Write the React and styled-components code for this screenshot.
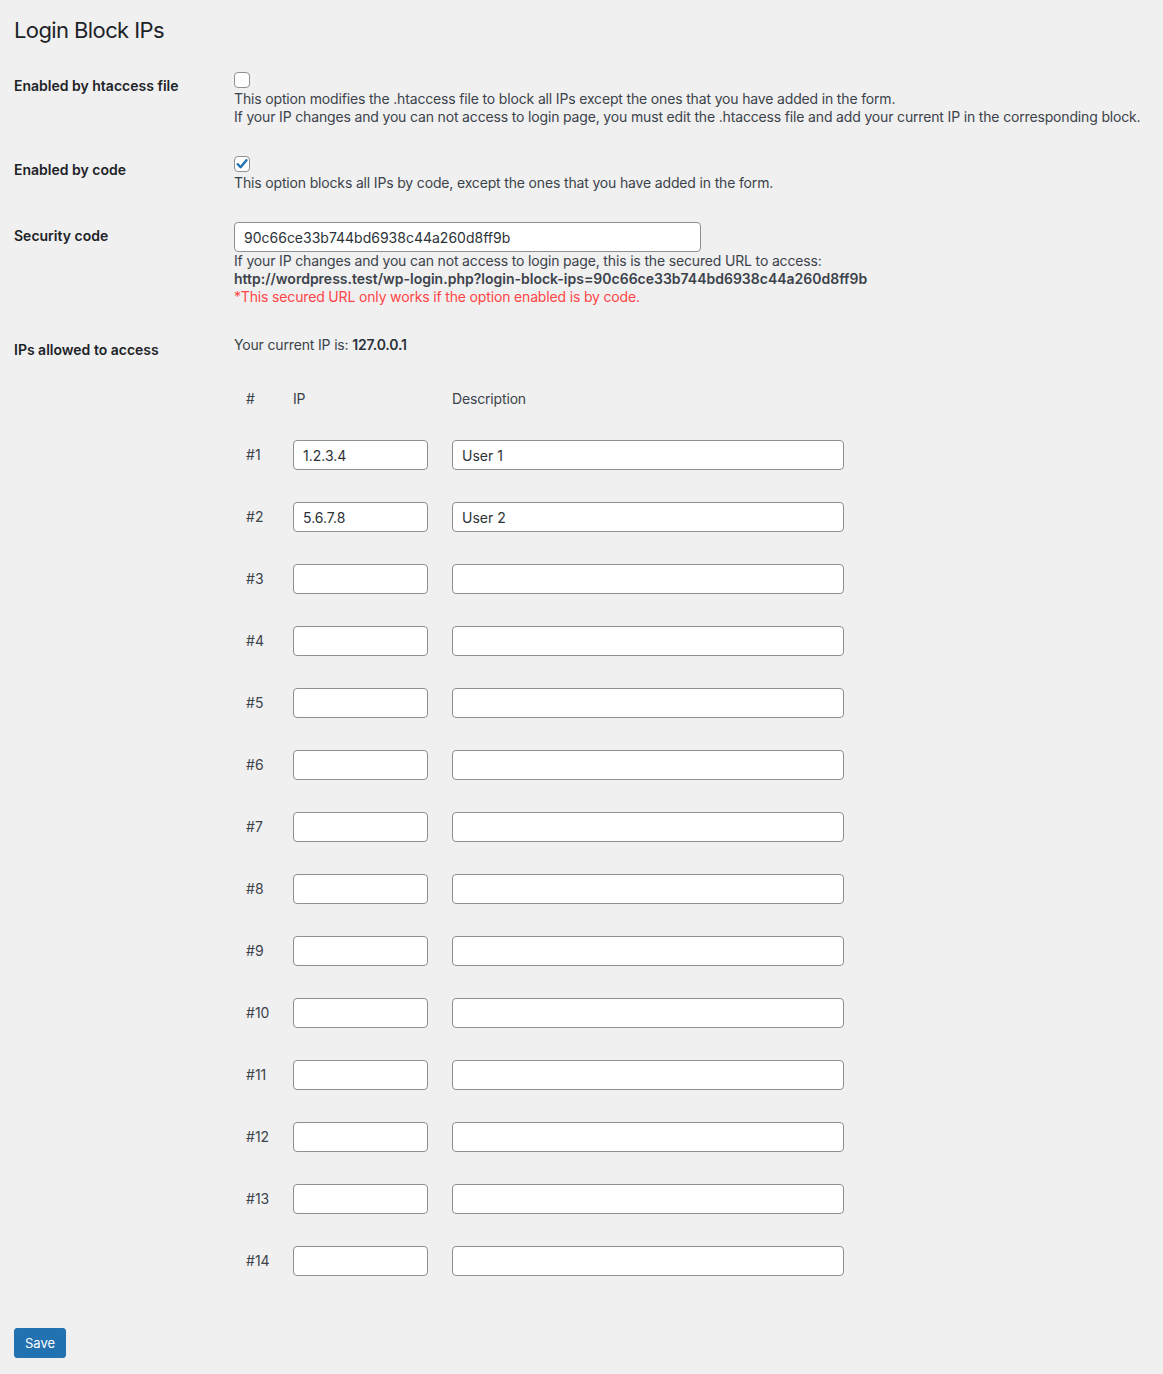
import React from "react";
import styled, { createGlobalStyle } from "styled-components";

const font = `Inter, "Liberation Sans", Arial, sans-serif`;

const GlobalStyle = createGlobalStyle`
  body {
    margin: 0;
    background: #f0f0f1;
    color: #3c434a;
    font-family: ${font};
    font-size: 14px;
  }
`;

const Wrap = styled.div`
  padding: 0 14px 16px 14px;
`;

const Title = styled.h1`
  margin: 0;
  padding: 17px 0 0;
  height: 40px;
  font-size: 22px;
  font-weight: 400;
  letter-spacing: -0.6px;
  line-height: 26px;
  color: #1d2327;
`;

const Row = styled.div`
  display: flex;
  align-items: flex-start;
`;

const Label = styled.div`
  width: 220px;
  flex: none;
  padding: 20px 0;
  font-weight: 600;
  font-size: 14px;
  line-height: 18px;
  color: #1d2327;
`;

const Field = styled.div`
  flex: 1;
  padding: 15px 0;
  line-height: 18px;
`;

const Description = styled.p`
  margin: 0;
  line-height: 18px;
  white-space: nowrap;
  letter-spacing: ${({ $bold }) => ($bold ? "0" : "-0.16px")};
  color: ${({ $warn }) => ($warn ? "#ff4545" : "#3c434a")};
  font-weight: ${({ $bold }) => ($bold ? 600 : 400)};
`;

const Box = styled.span`
  display: block;
  width: 16px;
  height: 16px;
  box-sizing: border-box;
  border: 1px solid #8c8f94;
  border-radius: 4px;
  background: #fff;
  margin: 0 0 2px;
  position: relative;

  svg {
    position: absolute;
    left: 1px;
    top: 1px;
  }
`;

const Checkbox = ({ checked }) => (
  <Box>
    {checked && (
      <svg width="12" height="12" viewBox="0 0 12 12">
        <path
          d="M1.8 6.2 L4.6 9.2 L10.4 2.2"
          fill="none"
          stroke="#2271b1"
          strokeWidth="2.4"
          strokeLinecap="round"
          strokeLinejoin="round"
        />
      </svg>
    )}
  </Box>
);

const TextInput = styled.input`
  display: block;
  box-sizing: border-box;
  width: ${({ $w }) => $w}px;
  height: 30px;
  margin: 0;
  padding: 0 9px;
  border: 1px solid #8c8f94;
  border-radius: 4px;
  background: #fff;
  color: #2c3338;
  font-family: ${font};
  font-size: 14px;
  outline: none;
`;

const IpTable = styled.div`
  display: grid;
  grid-template-columns: 47px 159px 416px;
  margin-top: 20px;
`;

const HeadCell = styled.div`
  padding: 16px 12px;
  line-height: 18px;
  letter-spacing: -0.16px;
  color: #3c434a;
`;

const Cell = styled.div`
  display: flex;
  align-items: center;
  height: 62px;
  padding: 0 12px;
  color: #3c434a;
`;

const Strong = styled.strong`
  font-weight: 600;
  color: #2c3338;
`;

const SaveButton = styled.button`
  margin-top: 21px;
  height: 30px;
  padding: 0 10px;
  border: 1px solid #2271b1;
  border-radius: 3px;
  background: #2271b1;
  color: #fff;
  font-family: ${font};
  font-size: 13px;
  cursor: pointer;
`;

const code = "90c66ce33b744bd6938c44a260d8ff9b";

const ips = [
  { ip: "1.2.3.4", desc: "User 1" },
  { ip: "5.6.7.8", desc: "User 2" },
  ...Array.from({ length: 12 }, () => ({ ip: "", desc: "" })),
];

export default function App() {
  return (
    <Wrap>
      <GlobalStyle />
      <Title>Login Block IPs</Title>

      <Row>
        <Label>Enabled by htaccess file</Label>
        <Field>
          <Checkbox />
          <Description>
            This option modifies the .htaccess file to block all IPs except the
            ones that you have added in the form.
          </Description>
          <Description>
            If your IP changes and you can not access to login page, you must
            edit the .htaccess file and add your current IP in the corresponding
            block.
          </Description>
        </Field>
      </Row>

      <Row>
        <Label>Enabled by code</Label>
        <Field>
          <Checkbox checked />
          <Description>
            This option blocks all IPs by code, except the ones that you have
            added in the form.
          </Description>
        </Field>
      </Row>

      <Row>
        <Label>Security code</Label>
        <Field>
          <TextInput $w={467} defaultValue={code} />
          <Description>
            If your IP changes and you can not access to login page, this is the
            secured URL to access:
          </Description>
          <Description $bold>
            http://wordpress.test/wp-login.php?login-block-ips={code}
          </Description>
          <Description $warn>
            *This secured URL only works if the option enabled is by code.
          </Description>
        </Field>
      </Row>

      <Row>
        <Label>IPs allowed to access</Label>
        <Field>
          <Description>
            Your current IP is: <Strong>127.0.0.1</Strong>
          </Description>
          <IpTable>
            <HeadCell>#</HeadCell>
            <HeadCell>IP</HeadCell>
            <HeadCell>Description</HeadCell>
            {ips.map((r, i) => (
              <React.Fragment key={i}>
                <Cell>#{i + 1}</Cell>
                <Cell>
                  <TextInput $w={135} defaultValue={r.ip} />
                </Cell>
                <Cell>
                  <TextInput $w={392} defaultValue={r.desc} />
                </Cell>
              </React.Fragment>
            ))}
          </IpTable>
        </Field>
      </Row>

      <SaveButton>Save</SaveButton>
    </Wrap>
  );
}
